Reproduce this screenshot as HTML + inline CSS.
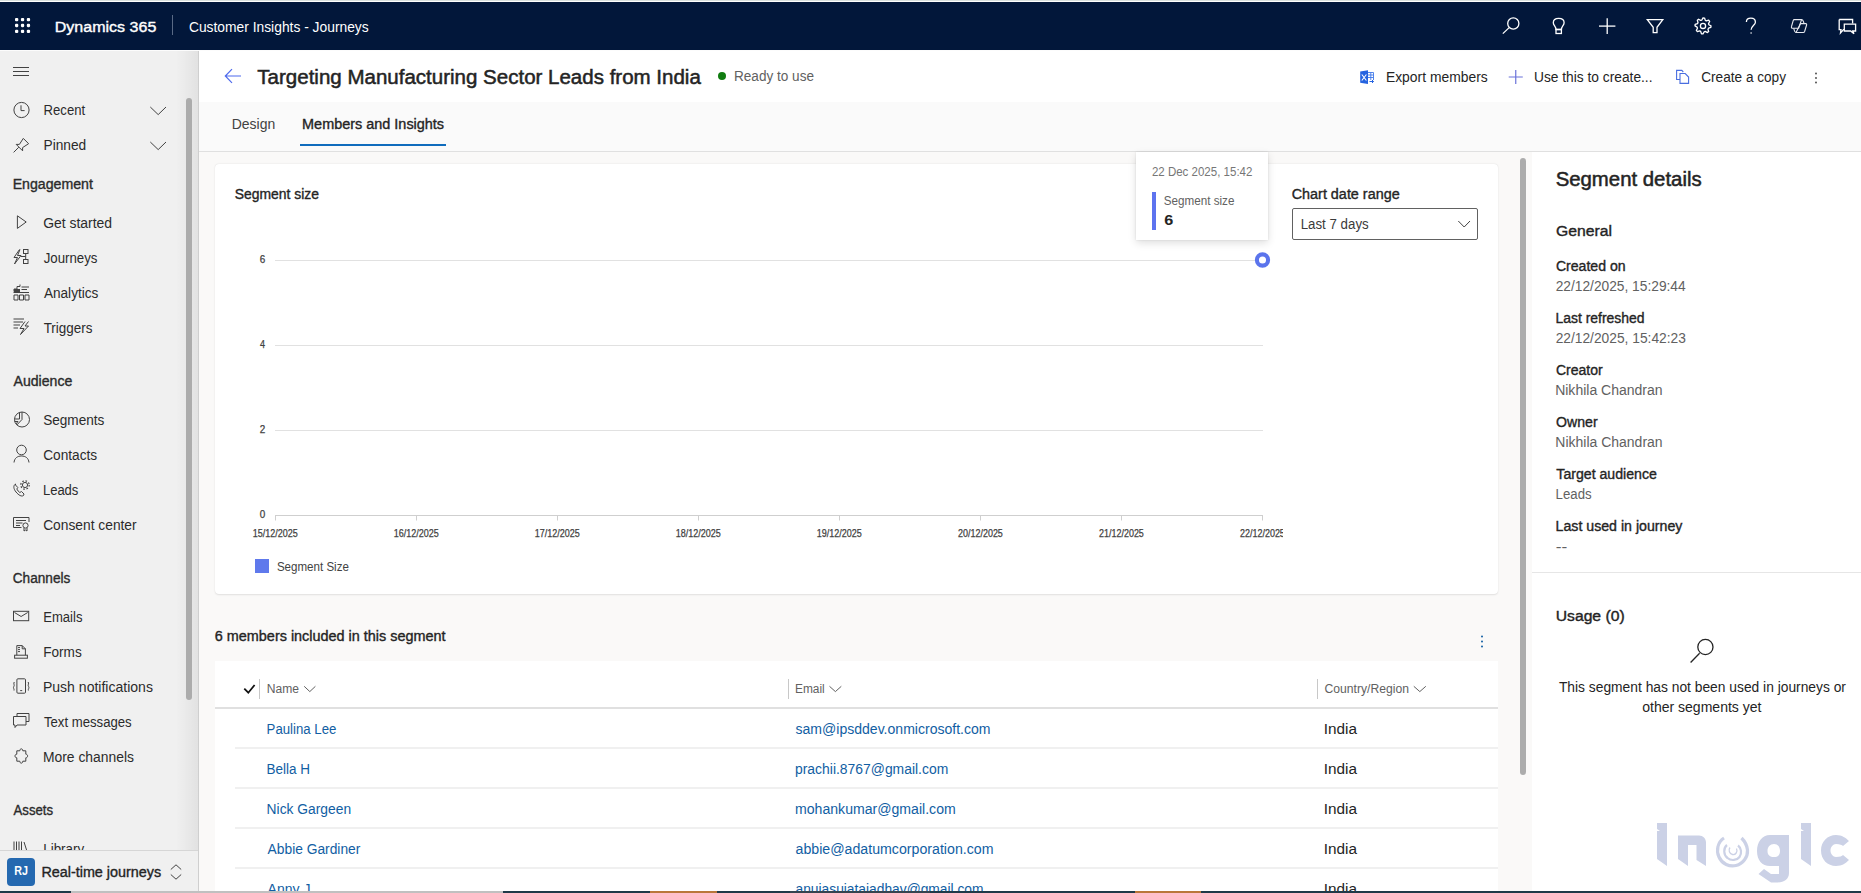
<!DOCTYPE html>
<html><head><meta charset="utf-8"><title>Targeting Manufacturing Sector Leads from India - Dynamics 365</title>
<style>
html,body{margin:0;padding:0;}
body{width:1861px;height:893px;overflow:hidden;position:relative;background:#faf9f8;font-family:"Liberation Sans",sans-serif;}
.a{position:absolute;box-sizing:border-box;}
svg text{font-family:"Liberation Sans",sans-serif;}
</style></head><body>
<div class="a" style="left:0;top:0;width:1861px;height:1px;background:#d9e0dd"></div>
<div class="a" style="left:0;top:1px;width:1861px;height:1px;background:#fdfefd"></div>
<header class="a" style="left:0;top:2px;width:1861px;height:48px;background:#02173a"></header>
<div class="a" style="left:0;top:50px;width:1861px;height:1px;background:#fcfcfc"></div>
<nav class="a" style="left:0;top:51px;width:199px;height:840px;background:#f0f0f0;border-right:1px solid #cfcfcf">
  <div class="a" style="left:176px;top:0;width:22px;height:840px;background:linear-gradient(90deg,rgba(0,0,0,0),rgba(0,0,0,.06))"></div>
  <div class="a" style="left:186px;top:47px;width:6px;height:602px;border-radius:3px;background:#acacac"></div>
  <div class="a" style="left:0;top:799px;width:198px;height:41px;background:#f0f0f0;border-top:1px solid #d6d6d6"></div>
  <div class="a" style="left:7px;top:807px;width:28px;height:28px;border-radius:4px;background:#2569b0;"></div>
</nav>
<main>
<div class="a" style="left:199px;top:51px;width:1662px;height:51px;background:#ffffff"></div>
<div class="a" style="left:199px;top:102px;width:1662px;height:50px;background:#fafafa;border-bottom:1px solid #e0e0e0"></div>
<div class="a" style="left:300px;top:144px;width:146px;height:2px;background:#0f6cbd"></div>
<section class="a" style="left:215px;top:164px;width:1283px;height:430px;background:#fff;border-radius:4px;box-shadow:0 0.6px 1.8px rgba(0,0,0,.10),0 0 1px rgba(0,0,0,.06)"></section>
<div class="a" style="left:1292px;top:208px;width:186px;height:32px;border:1px solid #616161;border-radius:2px;background:#fff"></div>
<section class="a" style="left:215px;top:661px;width:1283px;height:240px;background:#fff">
  <div class="a" style="left:0;top:46px;width:1283px;height:2px;background:#e0e0e0"></div>
  <div class="a" style="left:20px;top:86px;width:1263px;height:2px;background:#f0f0f0"></div>
  <div class="a" style="left:20px;top:126px;width:1263px;height:2px;background:#f0f0f0"></div>
  <div class="a" style="left:20px;top:166px;width:1263px;height:2px;background:#f0f0f0"></div>
  <div class="a" style="left:20px;top:206px;width:1263px;height:2px;background:#f0f0f0"></div>
</section>
<div class="a" style="left:1520px;top:158px;width:6px;height:617px;border-radius:3px;background:#acacac"></div>
<aside class="a" style="left:1532px;top:152px;width:329px;height:739px;background:#fff">
  <div class="a" style="left:0;top:420px;width:329px;height:1px;background:#e6e6e6"></div>
</aside>
<div class="a" style="left:1136px;top:152px;width:132px;height:88px;background:#fff;box-shadow:0 3px 8px rgba(0,0,0,.13),0 0 2px rgba(0,0,0,.10)"></div>
</main>
<svg class="a" style="left:0;top:0" width="1861" height="893" viewBox="0 0 1861 893">
<defs>
<clipPath id="clipLib"><rect x="0" y="800" width="198" height="50"/></clipPath>
<clipPath id="clipDate"><rect x="1200" y="520" width="83" height="30"/></clipPath>
</defs>
<rect x="15.00" y="18.00" width="3.3" height="3.3" rx="1.1" fill="#fff"/>
<rect x="15.00" y="23.85" width="3.3" height="3.3" rx="1.1" fill="#fff"/>
<rect x="15.00" y="29.70" width="3.3" height="3.3" rx="1.1" fill="#fff"/>
<rect x="20.90" y="18.00" width="3.3" height="3.3" rx="1.1" fill="#fff"/>
<rect x="20.90" y="23.85" width="3.3" height="3.3" rx="1.1" fill="#fff"/>
<rect x="20.90" y="29.70" width="3.3" height="3.3" rx="1.1" fill="#fff"/>
<rect x="26.80" y="18.00" width="3.3" height="3.3" rx="1.1" fill="#fff"/>
<rect x="26.80" y="23.85" width="3.3" height="3.3" rx="1.1" fill="#fff"/>
<rect x="26.80" y="29.70" width="3.3" height="3.3" rx="1.1" fill="#fff"/>
<line x1="172.5" y1="15" x2="172.5" y2="35" stroke="#5a6a85" stroke-width="1"/>
<circle cx="1513.3" cy="23.5" r="5.6" stroke="#fff" stroke-width="1.3" fill="none"/><line x1="1502.8" y1="33.6" x2="1509.2" y2="27.6" stroke="#fff" stroke-width="1.3" fill="none"/>
<path d="M1556 29.5 C1556 26.5 1553.3 25.5 1553.3 22.7 C1553.3 19.9 1555.6 18.3 1558.7 18.3 C1561.8 18.3 1564.1 19.9 1564.1 22.7 C1564.1 25.5 1561.4 26.5 1561.4 29.5 Z" stroke="#fff" stroke-width="1.3" fill="none"/><rect x="1556" y="29.5" width="5.4" height="4" stroke="#fff" stroke-width="1.3" fill="none"/>
<line x1="1599" y1="26.1" x2="1615.4" y2="26.1" stroke="#fff" stroke-width="1.3" fill="none"/><line x1="1607.2" y1="18.2" x2="1607.2" y2="34" stroke="#fff" stroke-width="1.3" fill="none"/>
<path d="M1647.3 19.6 H1662.8 L1657 27.3 V32.6 H1653.2 V27.3 Z" stroke="#fff" stroke-width="1.3" fill="none"/>
<polygon points="1703.00,17.90 1704.56,18.05 1705.30,20.36 1706.33,20.91 1708.66,20.24 1709.65,21.46 1708.54,23.60 1708.88,24.73 1711.00,25.90 1710.85,27.46 1708.54,28.20 1707.99,29.23 1708.66,31.56 1707.44,32.55 1705.30,31.44 1704.17,31.78 1703.00,33.90 1701.44,33.75 1700.70,31.44 1699.67,30.89 1697.34,31.56 1696.35,30.34 1697.46,28.20 1697.12,27.07 1695.00,25.90 1695.15,24.34 1697.46,23.60 1698.01,22.57 1697.34,20.24 1698.56,19.25 1700.70,20.36 1701.83,20.02" stroke="#fff" stroke-width="1.3" fill="none" stroke-linejoin="round"/><circle cx="1703" cy="25.9" r="2.6" stroke="#fff" stroke-width="1.3" fill="none"/>
<path d="M1746.4 22 C1746.4 19.6 1748.4 18.2 1750.9 18.2 C1753.5 18.2 1755.4 19.8 1755.4 22.2 C1755.4 25.4 1751.1 25.9 1751.1 29.8" stroke="#fff" stroke-width="1.3" fill="none"/><circle cx="1751.1" cy="33" r="0.8" fill="#fff"/>
<path d="M1794.2 19.6 H1801.6 L1798.6 28.3 H1792.6 C1791.6 28.3 1791.2 27.4 1791.5 26.5 L1793.2 20.6 C1793.4 20 1793.7 19.6 1794.2 19.6 Z" stroke="#e6e8ee" stroke-width="1.1" fill="none" stroke-linejoin="round"/><path d="M1800.6 23.6 H1805.8 C1806.5 23.6 1806.8 24.3 1806.6 25 L1804.6 31.5 C1804.4 32.1 1804 32.5 1803.4 32.5 H1796 L1800.6 23.6 Z" stroke="#e6e8ee" stroke-width="1.1" fill="none" stroke-linejoin="round"/><path d="M1801.6 19.6 C1802.6 19.6 1803.2 20.5 1803.6 22 L1804 23.6 M1796 32.5 C1795 32.5 1794.5 31.5 1794.2 30 L1793.8 28.3" stroke="#e6e8ee" stroke-width="1.1" fill="none"/>
<path d="M1839.2 19.5 H1852.6 V23.6 M1839.2 19.5 V29.6 H1841 L1840.5 33 L1843.5 29.6 H1844" stroke="#fff" stroke-width="1.3" fill="none"/><path d="M1844.3 24.2 H1855.6 V31 H1852.8 L1854 33.8 L1850.6 31 H1844.3 Z" stroke="#fff" stroke-width="1.3" fill="none"/>
<path d="M13 67.5 H29 M13 71.5 H29 M13 75.5 H29" stroke="#424242" stroke-width="1" fill="none"/>
<circle cx="21.5" cy="110" r="7.6" stroke="#424242" stroke-width="1" fill="none"/><path d="M21 105.3 V110.6 H24.6" stroke="#424242" stroke-width="1" fill="none"/>
<path d="M13.6 152.4 L18.8 147.2 M16.2 144.4 L19.4 144.4 L23.3 138.4 L28.6 143.7 L22.6 147.6 L22.6 150.8 Z" stroke="#424242" stroke-width="1" fill="none" stroke-linejoin="round"/>
<path d="M150.3 107 L158.2 114.6 L166 107" stroke="#424242" stroke-width="1" fill="none"/><path d="M150.3 142 L158.2 149.6 L166 142" stroke="#424242" stroke-width="1" fill="none"/>
<path d="M17.4 215.8 L26.2 222 L17.4 228.4 Z" stroke="#424242" stroke-width="1" fill="none"/>
<path d="M19.5 249.5 L14 257.5 H17.5 L14.5 264 L21 255.5 H17.5 L20 249.5" stroke="#424242" stroke-width="1" fill="none"/><rect x="23.5" y="249.5" width="4.5" height="4" stroke="#424242" stroke-width="1" fill="none"/><rect x="23.5" y="259.5" width="4.5" height="4" stroke="#424242" stroke-width="1" fill="none"/><path d="M25.7 253.5 V259.5 M21 256.5 H25.7" stroke="#424242" stroke-width="1" fill="none"/>
<path d="M13.5 292.5 H29 M14 295 V300 H18 V295 Z M19.5 295 V300 H23.5 V295 Z M25 295 V300 H29 V295 Z" stroke="#424242" stroke-width="1" fill="none"/><path d="M14 291.5 V289 H17 V286.5 H20 V284.5 M21.5 287 H29 M21.5 289.5 H27" stroke="#424242" stroke-width="1" fill="none"/><rect x="14" y="289" width="6" height="3" fill="#424242"/>
<path d="M13.5 319 H24 M13.5 322 H23 M13.5 325 H20 M13.5 328 H18" stroke="#424242" stroke-width="1" fill="none"/><path d="M25 321.5 L20 328.5 H24 L20.5 334.5 L28.5 326 H25 L28.5 321.5" stroke="#424242" stroke-width="1" fill="none"/>
<circle cx="22" cy="419.5" r="7.5" stroke="#424242" stroke-width="1" fill="none"/><path d="M22 412 V419.5 L16.8 425" stroke="#424242" stroke-width="1" fill="none"/><path d="M19.5 412.5 L19.5 419 L14.5 419 M14.6 421.5 L18 421.5 L15.9 424" stroke="#424242" stroke-width="1" fill="none"/>
<circle cx="21.5" cy="450" r="4.8" stroke="#424242" stroke-width="1" fill="none"/><path d="M14 462.5 C14.5 458 17.5 456 21.5 456 C25.5 456 28.5 458 29 462.5" stroke="#424242" stroke-width="1" fill="none"/>
<path d="M15.5 484 C13 485.5 13.5 489 16 492 C18.5 495 21.5 497 23.5 495.5 L24 494 L21.5 491.5 L19.8 492.5 C18.5 491.5 17.5 490.5 16.8 489 L17.8 487.5 L15.5 485 Z" stroke="#424242" stroke-width="1" fill="none"/><circle cx="25" cy="485" r="2.6" stroke="#424242" stroke-width="1" fill="none"/><circle cx="25" cy="485" r="4.2" stroke="#424242" stroke-width="1.2" stroke-dasharray="1.6 1.7" fill="none"/>
<path d="M21.5 527.5 H13.5 V517.5 H29 V522" stroke="#424242" stroke-width="1" fill="none"/><path d="M16 520.5 H26 M16 523 H22.5 M16 525.5 H20" stroke="#424242" stroke-width="1" fill="none"/><circle cx="25.5" cy="525.5" r="2.6" stroke="#424242" stroke-width="1" fill="none"/><path d="M24 528 V531 L25.5 530 L27 531 V528" stroke="#424242" stroke-width="1" fill="none"/>
<rect x="13.5" y="611.3" width="15.2" height="9.4" stroke="#424242" stroke-width="1" fill="none" stroke-width="1.2"/><path d="M14.5 612.5 L21.1 616.5 L27.7 612.5" stroke="#424242" stroke-width="1" fill="none"/>
<path d="M16.8 655.2 V645.6 H22.2 L25.4 648.8 V655.2" stroke="#424242" stroke-width="1" fill="none" stroke-width="1.2"/><rect x="14.6" y="655.2" width="12.8" height="3" stroke="#424242" stroke-width="1" fill="none" stroke-width="1.1"/><path d="M22.2 645.6 V648.8 H25.4" stroke="#424242" stroke-width="1" fill="none"/><path d="M18 647.6 H20 M18 649.6 H20 M18 651.6 H20" stroke="#424242" stroke-width="1" fill="none"/>
<rect x="16.9" y="678.8" width="8.6" height="14.4" rx="1" stroke="#424242" stroke-width="1" fill="none" stroke-width="1.2"/><path d="M20.2 690.6 H22.2" stroke="#424242" stroke-width="1" fill="none" stroke-width="1.2"/><path d="M14.3 682 C13 683.5 15 685 13.8 686.5 C12.8 688 14.5 689 14 690.5 M28.1 682 C29.4 683.5 27.4 685 28.6 686.5 C29.6 688 27.9 689 28.4 690.5" stroke="#424242" stroke-width="1" fill="none"/>
<path d="M17 716 V713.5 H29 V721.5 H26" stroke="#424242" stroke-width="1" fill="none"/><path d="M13.5 716.5 H26 V725 H17 L15 727.5 V725 H13.5 Z" stroke="#424242" stroke-width="1" fill="none"/>
<path d="M19.8 750.8 C19.8 748.2 22.8 748.2 22.8 750.8 H25.8 V754.2 C28.2 754.2 28.2 757.8 25.8 757.8 V761.2 H22.8 C22.8 763.8 19.8 763.8 19.8 761.2 H16.8 V757.8 C14.4 757.8 14.4 754.2 16.8 754.2 V750.8 Z" stroke="#424242" stroke-width="1" fill="none" stroke-width="1.1"/>
<g clip-path="url(#clipLib)"><path d="M14 841.5 V856 M16.5 841.5 V856 M19 841.5 V856 M21.5 841.5 V856 M24 842 L28.5 856" stroke="#424242" stroke-width="1" fill="none"/></g>
<path d="M170.8 869.5 L176 864.8 L181.2 869.5 M170.8 874.5 L176 879.2 L181.2 874.5" stroke="#424242" stroke-width="1" fill="none"/>
<path d="M241 76 H225.5 M232 69.2 L225.3 76 L232 82.8" stroke="#4f6bed" stroke-width="1.2" fill="none"/>
<circle cx="722" cy="76" r="4" fill="#107c10"/>
<path d="M1360.2 71.5 L1368 70.2 V84 L1360.2 82.7 Z" fill="#2563e0"/><path d="M1361.8 74.5 L1366.4 80.5 M1366.4 74.5 L1361.8 80.5" stroke="#fff" stroke-width="1.1"/><path d="M1368 72.5 H1373.5 V80 M1368 75 H1373.5 M1368 77.5 H1373.5 M1370.8 72.5 V80" stroke="#3f78ea" stroke-width="0.9" fill="none"/><path d="M1369.5 81.5 H1373.5 L1372 80 M1373.5 81.5 L1372 83" stroke="#2563e0" stroke-width="1" fill="none"/>
<path d="M1508.7 77 H1522.8 M1515.75 70 V84" stroke="#6b73d9" stroke-width="1.2"/>
<path d="M1679.5 79.5 H1676.6 V70.4 H1681.8 L1683.3 72 M1680 73.5 H1685.2 L1688.6 77 V83.4 H1680 Z" stroke="#4a6ee0" stroke-width="1.1" fill="none"/>
<circle cx="1816" cy="73.5" r="0.9" fill="#424242"/>
<circle cx="1816" cy="78" r="0.9" fill="#424242"/>
<circle cx="1816" cy="82.5" r="0.9" fill="#424242"/>
<line x1="275" y1="260.5" x2="1263" y2="260.5" stroke="#e1e1e1" stroke-width="1"/>
<line x1="275" y1="345.5" x2="1263" y2="345.5" stroke="#e1e1e1" stroke-width="1"/>
<line x1="275" y1="430.5" x2="1263" y2="430.5" stroke="#e1e1e1" stroke-width="1"/>
<line x1="275" y1="515.5" x2="1263" y2="515.5" stroke="#cfcfcf" stroke-width="1"/>
<line x1="275.5" y1="515" x2="275.5" y2="520.5" stroke="#cfcfcf" stroke-width="1"/>
<line x1="416.5" y1="515" x2="416.5" y2="520.5" stroke="#cfcfcf" stroke-width="1"/>
<line x1="557.5" y1="515" x2="557.5" y2="520.5" stroke="#cfcfcf" stroke-width="1"/>
<line x1="698.5" y1="515" x2="698.5" y2="520.5" stroke="#cfcfcf" stroke-width="1"/>
<line x1="839.5" y1="515" x2="839.5" y2="520.5" stroke="#cfcfcf" stroke-width="1"/>
<line x1="980.5" y1="515" x2="980.5" y2="520.5" stroke="#cfcfcf" stroke-width="1"/>
<line x1="1121.5" y1="515" x2="1121.5" y2="520.5" stroke="#cfcfcf" stroke-width="1"/>
<line x1="1262.5" y1="515" x2="1262.5" y2="520.5" stroke="#cfcfcf" stroke-width="1"/>
<circle cx="1262.5" cy="260" r="5.6" fill="#fff" stroke="#5b74ec" stroke-width="4.1"/>
<path d="M1458.3 221 L1464.2 227 L1470 221" stroke="#424242" stroke-width="1" fill="none"/>
<rect x="255" y="559" width="14" height="14" fill="#5f79ec"/>
<rect x="1152" y="192" width="4" height="38" fill="#5d73ef"/>
<path d="M244.3 688.7 L248.3 692.7 L254.6 685" stroke="#111" stroke-width="1.8" fill="none"/>
<line x1="259.5" y1="679" x2="259.5" y2="699" stroke="#c8c8c8"/>
<line x1="788.5" y1="679" x2="788.5" y2="699" stroke="#c8c8c8"/>
<line x1="1317.5" y1="679" x2="1317.5" y2="699" stroke="#c8c8c8"/>
<path d="M304.2 686.3 L309.80 691.6 L315.4 686.3" stroke="#616161" stroke-width="1" fill="none"/>
<path d="M829.5 686.3 L835.40 691.6 L841.3 686.3" stroke="#616161" stroke-width="1" fill="none"/>
<path d="M1413.8 686.3 L1419.80 691.6 L1425.8 686.3" stroke="#616161" stroke-width="1" fill="none"/>
<circle cx="1482" cy="636.5" r="1" fill="#115ea3"/>
<circle cx="1482" cy="641.5" r="1" fill="#115ea3"/>
<circle cx="1482" cy="646.5" r="1" fill="#115ea3"/>
<circle cx="1705.4" cy="647" r="7.6" stroke="#242424" stroke-width="1.3" fill="none"/><line x1="1690.6" y1="662.5" x2="1699.6" y2="653.2" stroke="#242424" stroke-width="1.3"/>
<g fill="#cbd1e6">
<path d="M1657 823 H1667 V866 L1657 859 V831 L1660 831 L1657 829 Z"/>
<path d="M1678 835.5 H1699 C1703 835.5 1706 838.5 1706 842.5 V866 L1696.5 860 V845 H1688 V866 L1678 859 Z"/>
<path d="M1770 835 H1789 V873 C1789 879 1784 882.5 1778 882.5 H1771 L1758.5 874 L1764 869 L1771 874 H1779 V866 H1770 C1762 866 1757 860 1757 851 C1757 842 1762 835 1770 835 Z M1774 844 C1770 844 1767.5 847 1767.5 851 C1767.5 855 1770 857 1774 857 C1778 857 1780 855 1780 851 C1780 847 1778 844 1774 844 Z" fill-rule="evenodd"/>
<path d="M1801 823 H1811 V866 L1801 859 V831 L1804 831 L1801 829 Z"/>
<path d="M1836 835 C1842 835 1846 838 1849 841 L1843 846 C1842 845 1840 844 1836 844 C1833 844 1830.5 847 1830.5 850.5 C1830.5 854 1833 857 1836 857 C1840 857 1842 856 1843 855 L1849 860 C1846 863 1842 866 1836 866 C1827.5 866 1821 859.5 1821 850.5 C1821 841.5 1827.5 835 1836 835 Z"/>
</g>
<g fill="none" stroke="#cbd1e6">
<path d="M1724 838 C1717.5 842 1716 851 1719 857 C1722 864 1729.5 867 1736 865.5 C1743 864 1748 857 1747.5 850 C1747 845 1744.5 841 1741.5 838" stroke-width="3.2"/>
<path d="M1727 845 C1723 848 1723.5 855 1727.5 858 C1731 861 1737 860.5 1739.5 857 C1742 853.5 1741.5 848 1738 845.5" stroke-width="2.2"/>
<path d="M1730 847.5 C1728 850 1729.5 854 1732.5 854.5 C1735.5 855 1738 852 1736.5 848.5" stroke-width="1.3"/>
</g>
<text x="54.80" y="31.70" font-size="15.5" stroke="#ffffff" stroke-width="0.388" fill="#ffffff" textLength="101.50" lengthAdjust="spacingAndGlyphs">Dynamics 365</text>
<text x="188.95" y="31.90" font-size="14" fill="#ffffff" textLength="179.75" lengthAdjust="spacingAndGlyphs">Customer Insights - Journeys</text>
<text x="257.35" y="84.30" font-size="20" stroke="#242424" stroke-width="0.500" fill="#242424" textLength="443.50" lengthAdjust="spacingAndGlyphs">Targeting Manufacturing Sector Leads from India</text>
<text x="734.00" y="80.80" font-size="14" fill="#616161" textLength="80.00" lengthAdjust="spacingAndGlyphs">Ready to use</text>
<text x="1385.95" y="81.80" font-size="14" fill="#242424" textLength="101.75" lengthAdjust="spacingAndGlyphs">Export members</text>
<text x="1534.00" y="81.80" font-size="14" fill="#242424" textLength="118.50" lengthAdjust="spacingAndGlyphs">Use this to create...</text>
<text x="1701.25" y="81.90" font-size="14" fill="#242424" textLength="84.75" lengthAdjust="spacingAndGlyphs">Create a copy</text>
<text x="231.75" y="128.90" font-size="14" fill="#424242" textLength="43.50" lengthAdjust="spacingAndGlyphs">Design</text>
<text x="302.10" y="128.90" font-size="14" stroke="#242424" stroke-width="0.350" fill="#242424" textLength="142.00" lengthAdjust="spacingAndGlyphs">Members and Insights</text>
<text x="43.60" y="115.00" font-size="14" fill="#2b2b2b" textLength="41.50" lengthAdjust="spacingAndGlyphs">Recent</text>
<text x="43.50" y="150.00" font-size="14" fill="#2b2b2b" textLength="42.75" lengthAdjust="spacingAndGlyphs">Pinned</text>
<text x="12.70" y="188.80" font-size="14" stroke="#2b2b2b" stroke-width="0.350" fill="#2b2b2b" textLength="80.25" lengthAdjust="spacingAndGlyphs">Engagement</text>
<text x="43.15" y="228.00" font-size="14" fill="#2b2b2b" textLength="69.00" lengthAdjust="spacingAndGlyphs">Get started</text>
<text x="43.65" y="263.00" font-size="14" fill="#2b2b2b" textLength="53.75" lengthAdjust="spacingAndGlyphs">Journeys</text>
<text x="43.90" y="298.00" font-size="14" fill="#2b2b2b" textLength="54.50" lengthAdjust="spacingAndGlyphs">Analytics</text>
<text x="43.65" y="333.00" font-size="14" fill="#2b2b2b" textLength="48.75" lengthAdjust="spacingAndGlyphs">Triggers</text>
<text x="13.55" y="385.80" font-size="14" stroke="#2b2b2b" stroke-width="0.350" fill="#2b2b2b" textLength="58.75" lengthAdjust="spacingAndGlyphs">Audience</text>
<text x="43.15" y="424.60" font-size="14" fill="#2b2b2b" textLength="61.25" lengthAdjust="spacingAndGlyphs">Segments</text>
<text x="43.15" y="459.90" font-size="14" fill="#2b2b2b" textLength="54.00" lengthAdjust="spacingAndGlyphs">Contacts</text>
<text x="42.90" y="494.80" font-size="14" fill="#2b2b2b" textLength="35.50" lengthAdjust="spacingAndGlyphs">Leads</text>
<text x="43.15" y="529.60" font-size="14" fill="#2b2b2b" textLength="93.50" lengthAdjust="spacingAndGlyphs">Consent center</text>
<text x="12.80" y="582.50" font-size="14" stroke="#2b2b2b" stroke-width="0.350" fill="#2b2b2b" textLength="57.50" lengthAdjust="spacingAndGlyphs">Channels</text>
<text x="43.20" y="621.60" font-size="14" fill="#2b2b2b" textLength="39.25" lengthAdjust="spacingAndGlyphs">Emails</text>
<text x="43.20" y="656.90" font-size="14" fill="#2b2b2b" textLength="38.50" lengthAdjust="spacingAndGlyphs">Forms</text>
<text x="42.95" y="691.70" font-size="14" fill="#2b2b2b" textLength="110.00" lengthAdjust="spacingAndGlyphs">Push notifications</text>
<text x="43.95" y="727.00" font-size="14" fill="#2b2b2b" textLength="87.75" lengthAdjust="spacingAndGlyphs">Text messages</text>
<text x="42.95" y="762.00" font-size="14" fill="#2b2b2b" textLength="91.00" lengthAdjust="spacingAndGlyphs">More channels</text>
<text x="13.55" y="814.80" font-size="14" stroke="#2b2b2b" stroke-width="0.350" fill="#2b2b2b" textLength="39.50" lengthAdjust="spacingAndGlyphs">Assets</text>
<text x="43.20" y="854.00" font-size="14" fill="#2b2b2b" textLength="41.00" lengthAdjust="spacingAndGlyphs" clip-path="url(#clipLib)">Library</text>
<text x="41.40" y="876.50" font-size="14" stroke="#242424" stroke-width="0.350" fill="#242424" textLength="119.75" lengthAdjust="spacingAndGlyphs">Real-time journeys</text>
<text x="234.70" y="199.30" font-size="14" stroke="#242424" stroke-width="0.350" fill="#242424" textLength="84.25" lengthAdjust="spacingAndGlyphs">Segment size</text>
<text x="1291.70" y="199.20" font-size="14" stroke="#242424" stroke-width="0.350" fill="#242424" textLength="108.00" lengthAdjust="spacingAndGlyphs">Chart date range</text>
<text x="1300.70" y="229.00" font-size="14" fill="#3b3b3b" textLength="68.00" lengthAdjust="spacingAndGlyphs">Last 7 days</text>
<text x="276.90" y="570.90" font-size="12" fill="#424242" textLength="72.00" lengthAdjust="spacingAndGlyphs">Segment Size</text>
<text x="1151.90" y="175.80" font-size="12" fill="#767676" textLength="100.50" lengthAdjust="spacingAndGlyphs">22 Dec 2025, 15:42</text>
<text x="1163.70" y="204.90" font-size="12" fill="#616161" textLength="70.75" lengthAdjust="spacingAndGlyphs">Segment size</text>
<text x="1164.20" y="224.70" font-size="15.5" font-weight="bold" fill="#242424" textLength="9.00" lengthAdjust="spacingAndGlyphs">6</text>
<text x="214.80" y="640.90" font-size="14" stroke="#242424" stroke-width="0.350" fill="#242424" textLength="230.75" lengthAdjust="spacingAndGlyphs">6 members included in this segment</text>
<text x="266.80" y="693.00" font-size="12.5" fill="#616161" textLength="32.25" lengthAdjust="spacingAndGlyphs">Name</text>
<text x="795.00" y="693.00" font-size="12.5" fill="#616161" textLength="29.75" lengthAdjust="spacingAndGlyphs">Email</text>
<text x="1324.50" y="693.00" font-size="12.5" fill="#616161" textLength="84.50" lengthAdjust="spacingAndGlyphs">Country/Region</text>
<text x="266.60" y="733.90" font-size="14" fill="#115ea3" textLength="69.75" lengthAdjust="spacingAndGlyphs">Paulina Lee</text>
<text x="795.50" y="733.90" font-size="14" fill="#115ea3" textLength="195.00" lengthAdjust="spacingAndGlyphs">sam@ipsddev.onmicrosoft.com</text>
<text x="1323.70" y="733.90" font-size="14" fill="#242424" textLength="33.25" lengthAdjust="spacingAndGlyphs">India</text>
<text x="266.60" y="774.20" font-size="14" fill="#115ea3" textLength="43.50" lengthAdjust="spacingAndGlyphs">Bella H</text>
<text x="795.00" y="774.20" font-size="14" fill="#115ea3" textLength="153.25" lengthAdjust="spacingAndGlyphs">prachii.8767@gmail.com</text>
<text x="1323.70" y="774.20" font-size="14" fill="#242424" textLength="33.25" lengthAdjust="spacingAndGlyphs">India</text>
<text x="266.60" y="814.10" font-size="14" fill="#115ea3" textLength="84.50" lengthAdjust="spacingAndGlyphs">Nick Gargeen</text>
<text x="795.00" y="814.10" font-size="14" fill="#115ea3" textLength="160.75" lengthAdjust="spacingAndGlyphs">mohankumar@gmail.com</text>
<text x="1323.70" y="814.10" font-size="14" fill="#242424" textLength="33.25" lengthAdjust="spacingAndGlyphs">India</text>
<text x="267.60" y="854.00" font-size="14" fill="#115ea3" textLength="92.75" lengthAdjust="spacingAndGlyphs">Abbie Gardiner</text>
<text x="795.50" y="854.00" font-size="14" fill="#115ea3" textLength="198.00" lengthAdjust="spacingAndGlyphs">abbie@adatumcorporation.com</text>
<text x="1323.70" y="854.00" font-size="14" fill="#242424" textLength="33.25" lengthAdjust="spacingAndGlyphs">India</text>
<text x="267.60" y="894.00" font-size="14" fill="#115ea3">Anny J</text>
<text x="795.50" y="894.00" font-size="14" fill="#115ea3" textLength="188.00" lengthAdjust="spacingAndGlyphs">anujasujatajadhav@gmail.com</text>
<text x="1323.70" y="894.00" font-size="14" fill="#242424" textLength="33.25" lengthAdjust="spacingAndGlyphs">India</text>
<text x="1555.65" y="185.80" font-size="19.5" stroke="#242424" stroke-width="0.488" fill="#242424" textLength="146.00" lengthAdjust="spacingAndGlyphs">Segment details</text>
<text x="1555.90" y="236.00" font-size="15.5" stroke="#242424" stroke-width="0.388" fill="#242424" textLength="56.00" lengthAdjust="spacingAndGlyphs">General</text>
<text x="1555.90" y="271.00" font-size="14" stroke="#242424" stroke-width="0.350" fill="#242424" textLength="69.75" lengthAdjust="spacingAndGlyphs">Created on</text>
<text x="1555.65" y="290.50" font-size="14" fill="#616161" textLength="130.00" lengthAdjust="spacingAndGlyphs">22/12/2025, 15:29:44</text>
<text x="1555.40" y="323.00" font-size="14" stroke="#242424" stroke-width="0.350" fill="#242424" textLength="89.25" lengthAdjust="spacingAndGlyphs">Last refreshed</text>
<text x="1555.65" y="342.60" font-size="14" fill="#616161" textLength="130.25" lengthAdjust="spacingAndGlyphs">22/12/2025, 15:42:23</text>
<text x="1555.90" y="374.80" font-size="14" stroke="#242424" stroke-width="0.350" fill="#242424" textLength="46.75" lengthAdjust="spacingAndGlyphs">Creator</text>
<text x="1555.15" y="395.00" font-size="14" fill="#616161" textLength="107.50" lengthAdjust="spacingAndGlyphs">Nikhila Chandran</text>
<text x="1556.10" y="426.90" font-size="14" stroke="#242424" stroke-width="0.350" fill="#242424" textLength="41.50" lengthAdjust="spacingAndGlyphs">Owner</text>
<text x="1555.35" y="447.00" font-size="14" fill="#616161" textLength="107.25" lengthAdjust="spacingAndGlyphs">Nikhila Chandran</text>
<text x="1556.35" y="478.90" font-size="14" stroke="#242424" stroke-width="0.350" fill="#242424" textLength="100.50" lengthAdjust="spacingAndGlyphs">Target audience</text>
<text x="1555.60" y="498.60" font-size="14" fill="#616161" textLength="36.00" lengthAdjust="spacingAndGlyphs">Leads</text>
<text x="1555.60" y="531.00" font-size="14" stroke="#242424" stroke-width="0.350" fill="#242424" textLength="126.75" lengthAdjust="spacingAndGlyphs">Last used in journey</text>
<text x="1555.85" y="552.00" font-size="14" fill="#616161" textLength="11.50" lengthAdjust="spacingAndGlyphs">--</text>
<text x="1555.70" y="620.90" font-size="15.5" stroke="#242424" stroke-width="0.388" fill="#242424" textLength="69.00" lengthAdjust="spacingAndGlyphs">Usage (0)</text>
<text x="1558.95" y="691.60" font-size="14" fill="#242424" textLength="287.00" lengthAdjust="spacingAndGlyphs">This segment has not been used in journeys or</text>
<text x="1642.20" y="712.00" font-size="14" fill="#242424" textLength="119.25" lengthAdjust="spacingAndGlyphs">other segments yet</text>
<text x="259.75" y="263.00" font-size="10" stroke="#424242" stroke-width="0.250" fill="#424242" textLength="5.50" lengthAdjust="spacingAndGlyphs">6</text>
<text x="260.00" y="348.00" font-size="10" stroke="#424242" stroke-width="0.250" fill="#424242" textLength="5.00" lengthAdjust="spacingAndGlyphs">4</text>
<text x="259.75" y="433.00" font-size="10" stroke="#424242" stroke-width="0.250" fill="#424242" textLength="5.50" lengthAdjust="spacingAndGlyphs">2</text>
<text x="259.75" y="518.00" font-size="10" stroke="#424242" stroke-width="0.250" fill="#424242" textLength="5.50" lengthAdjust="spacingAndGlyphs">0</text>
<text x="252.85" y="537.10" font-size="10" stroke="#424242" stroke-width="0.250" fill="#424242" textLength="45.00" lengthAdjust="spacingAndGlyphs">15/12/2025</text>
<text x="393.85" y="537.10" font-size="10" stroke="#424242" stroke-width="0.250" fill="#424242" textLength="45.00" lengthAdjust="spacingAndGlyphs">16/12/2025</text>
<text x="534.85" y="537.10" font-size="10" stroke="#424242" stroke-width="0.250" fill="#424242" textLength="45.00" lengthAdjust="spacingAndGlyphs">17/12/2025</text>
<text x="675.85" y="537.10" font-size="10" stroke="#424242" stroke-width="0.250" fill="#424242" textLength="45.00" lengthAdjust="spacingAndGlyphs">18/12/2025</text>
<text x="816.85" y="537.10" font-size="10" stroke="#424242" stroke-width="0.250" fill="#424242" textLength="45.00" lengthAdjust="spacingAndGlyphs">19/12/2025</text>
<text x="958.10" y="537.10" font-size="10" stroke="#424242" stroke-width="0.250" fill="#424242" textLength="44.75" lengthAdjust="spacingAndGlyphs">20/12/2025</text>
<text x="1099.10" y="537.10" font-size="10" stroke="#424242" stroke-width="0.250" fill="#424242" textLength="44.75" lengthAdjust="spacingAndGlyphs">21/12/2025</text>
<text x="1240.10" y="537.10" font-size="10" stroke="#424242" stroke-width="0.250" fill="#424242" textLength="44.75" lengthAdjust="spacingAndGlyphs" clip-path="url(#clipDate)">22/12/2025</text>
<text x="14.25" y="874.80" font-size="12.5" font-weight="bold" fill="#ffffff" textLength="13.75" lengthAdjust="spacingAndGlyphs">RJ</text>
</svg>
<div class="a" style="left:0;top:891px;width:1861px;height:2px;background:#1f3a48">
  <div class="a" style="left:71px;top:0;width:432px;height:2px;background:#c0c0c0"></div>
  <div class="a" style="left:650px;top:0;width:67px;height:2px;background:#b9773a"></div>
  <div class="a" style="left:1135px;top:0;width:66px;height:2px;background:#b9773a"></div>
  <div class="a" style="left:790px;top:0;width:140px;height:2px;background:#34444f"></div>
</div>
</body></html>
